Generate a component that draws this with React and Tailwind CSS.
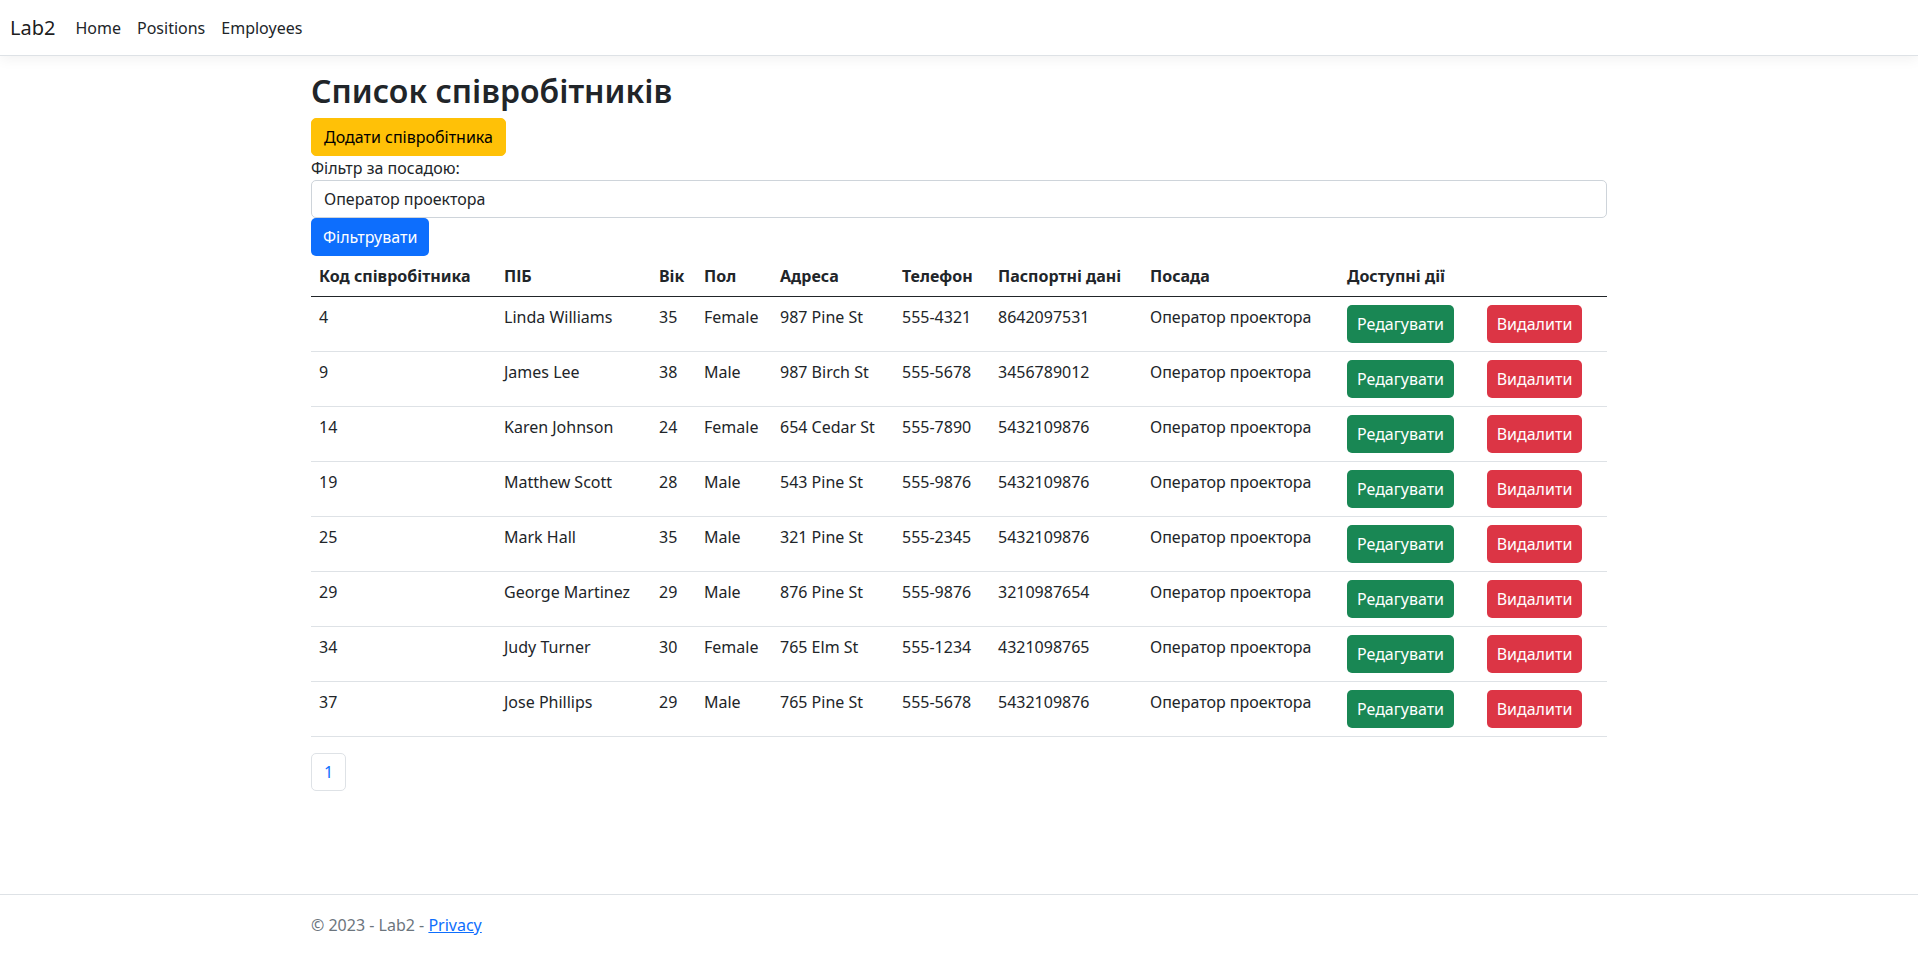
import React from "react";

const rows = [
  [4, "Linda Williams", 35, "Female", "987 Pine St", "555-4321", "8642097531"],
  [9, "James Lee", 38, "Male", "987 Birch St", "555-5678", "3456789012"],
  [14, "Karen Johnson", 24, "Female", "654 Cedar St", "555-7890", "5432109876"],
  [19, "Matthew Scott", 28, "Male", "543 Pine St", "555-9876", "5432109876"],
  [25, "Mark Hall", 35, "Male", "321 Pine St", "555-2345", "5432109876"],
  [29, "George Martinez", 29, "Male", "876 Pine St", "555-9876", "3210987654"],
  [34, "Judy Turner", 30, "Female", "765 Elm St", "555-1234", "4321098765"],
  [37, "Jose Phillips", 29, "Male", "765 Pine St", "555-5678", "5432109876"],
];

export default function App() {
  return (
    <div className="min-h-screen flex flex-col bg-white text-[#212529] text-[16px] leading-[24px] font-['Noto_Sans','Liberation_Sans',sans-serif]">
      <header className="bg-white border-b border-[#dee2e6] shadow-[0_0.25rem_0.75rem_rgba(0,0,0,0.05)] mb-4">
        <nav className="h-[55px] pl-[10px] pr-3 flex items-center">
          <span className="text-[20px] leading-[30px] text-[rgba(0,0,0,0.9)] mr-[12px]">Lab2</span>
          <a className="px-2 text-[#212529]">Home</a>
          <a className="px-2 text-[#212529]">Positions</a>
          <a className="px-2 text-[#212529]">Employees</a>
        </nav>
      </header>

      <main className="w-full max-w-[1320px] mx-auto px-3 pb-4">
        <h2 className="text-[32px] leading-[38px] font-semibold mb-2">Список співробітників</h2>
        <button className="h-[38px] px-3 rounded-[5px] bg-[#ffc107] text-black border border-[#ffc107]">
          Додати співробітника
        </button>
        <div>Фільтр за посадою:</div>
        <div className="h-[38px] w-full border border-[#ced4da] rounded-[5px] px-3 flex items-center">
          Оператор проектора
        </div>
        <button className="h-[38px] px-3 rounded-[5px] bg-[#0d6efd] text-white">Фільтрувати</button>

        <table className="table-fixed w-full border-collapse mb-4 text-left">
          <thead>
            <tr className="border-b border-[#212529]">
              <th className="w-[185px] px-2 py-2 font-bold">Код співробітника</th>
              <th className="w-[155px] px-2 py-2 font-bold">ПІБ</th>
              <th className="w-[45px] px-2 py-2 font-bold">Вік</th>
              <th className="w-[76px] px-2 py-2 font-bold">Пол</th>
              <th className="w-[122px] px-2 py-2 font-bold">Адреса</th>
              <th className="w-[96px] px-2 py-2 font-bold">Телефон</th>
              <th className="w-[152px] px-2 py-2 font-bold">Паспортні дані</th>
              <th className="w-[197px] px-2 py-2 font-bold">Посада</th>
              <th className="w-[140px] px-2 py-2 font-bold">Доступні дії</th>
              <th className="px-2 py-2"></th>
            </tr>
          </thead>
          <tbody>
            {rows.map((r) => (
              <tr key={r[0]} className="border-b border-[#dee2e6] align-top">
                {r.map((c, i) => (
                  <td key={i} className="px-2 py-2 whitespace-nowrap">{c}</td>
                ))}
                <td className="px-2 py-2 whitespace-nowrap">Оператор проектора</td>
                <td className="px-2 py-2">
                  <button className="h-[38px] w-[107px] rounded-[5px] bg-[#198754] text-white">Редагувати</button>
                </td>
                <td className="px-2 py-2">
                  <button className="h-[38px] w-[95px] rounded-[5px] bg-[#dc3545] text-white">Видалити</button>
                </td>
              </tr>
            ))}
          </tbody>
        </table>

        <div className="flex">
          <span className="h-[38px] w-[35px] flex items-center justify-center border border-[#dee2e6] rounded-[5px] text-[#0d6efd]">1</span>
        </div>
      </main>

      <footer className="mt-auto border-t border-[#dee2e6] h-[61px] text-[#6c757d] leading-[60px] whitespace-nowrap">
        <div className="w-full max-w-[1320px] mx-auto px-3">
          © 2023 - Lab2 - <a className="text-[#0d6efd] underline">Privacy</a>
        </div>
      </footer>
    </div>
  );
}
